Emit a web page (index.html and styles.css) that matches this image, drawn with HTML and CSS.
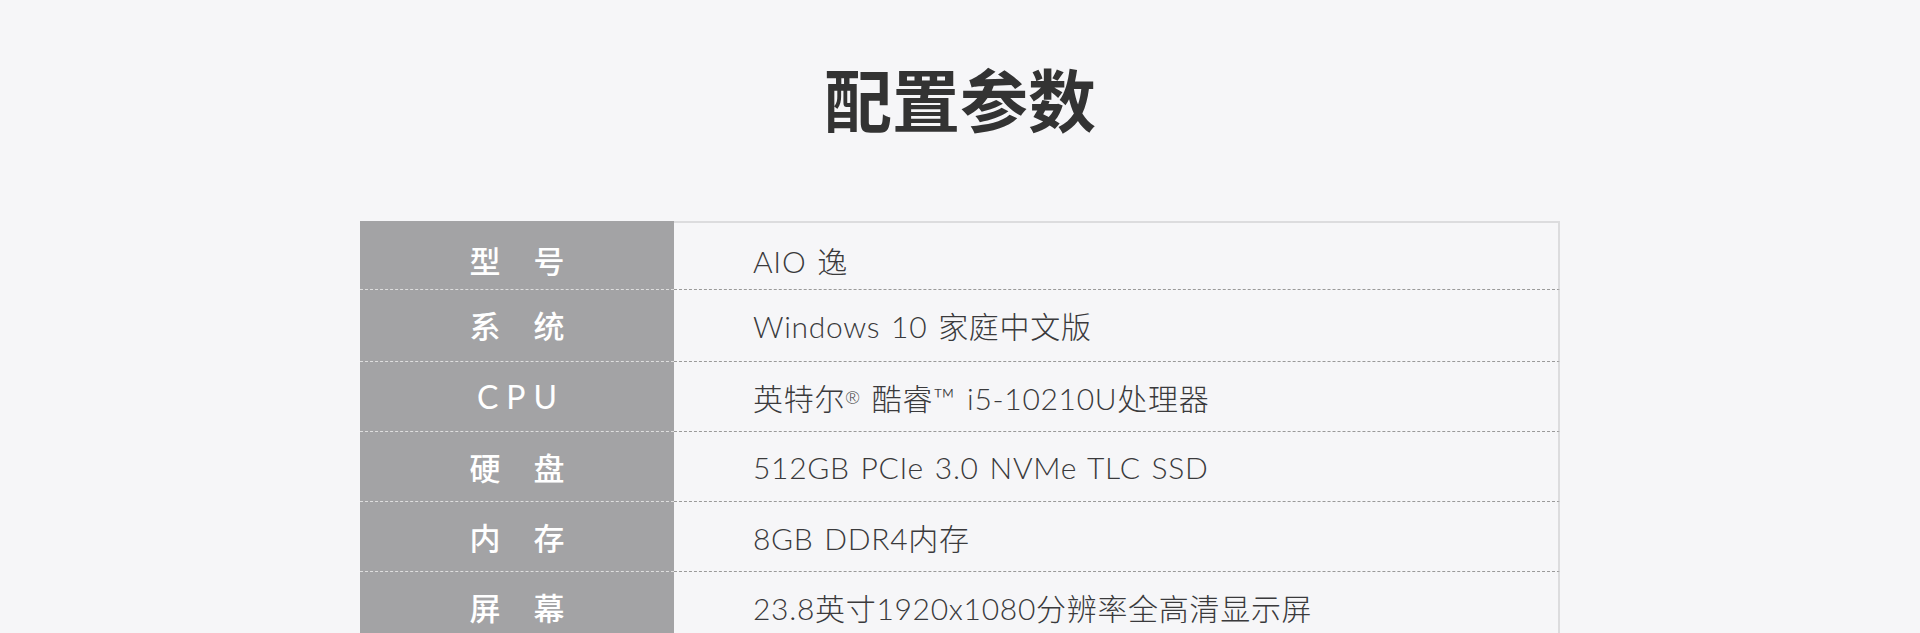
FILE: index.html
```html
<!DOCTYPE html>
<html lang="zh-CN">
<head>
<meta charset="utf-8">
<title>配置参数</title>
<link rel="stylesheet" href="styles.css">
</head>
<body>
<main class="page">
  <h1 class="title">配置参数</h1>
  <section class="specs">
    <div class="spec-row spec-row--first">
      <div class="spec-label">型号</div>
      <div class="spec-value">AIO 逸</div>
    </div>
    <div class="spec-row spec-row--tall">
      <div class="spec-label">系统</div>
      <div class="spec-value">Windows 10 家庭中文版</div>
    </div>
    <div class="spec-row">
      <div class="spec-label spec-label--latin">CPU</div>
      <div class="spec-value">英特尔<sup class="mark">®</sup> 酷睿™ i5-10210U处理器</div>
    </div>
    <div class="spec-row">
      <div class="spec-label">硬盘</div>
      <div class="spec-value">512GB PCIe 3.0 NVMe TLC SSD</div>
    </div>
    <div class="spec-row">
      <div class="spec-label">内存</div>
      <div class="spec-value">8GB DDR4内存</div>
    </div>
    <div class="spec-row">
      <div class="spec-label">屏幕</div>
      <div class="spec-value">23.8英寸1920x1080分辨率全高清显示屏</div>
    </div>
  </section>
</main>
</body>
</html>
```
FILE: styles.css
```css
html, body {
  margin: 0;
  padding: 0;
  background: #f6f6f8;
}

.page {
  display: flex;
  flex-direction: column;
  align-items: center;
  padding-top: 64px;
}

.title {
  margin: 0;
  font-family: "Noto Sans CJK SC", sans-serif;
  font-weight: 700;
  font-size: 68px;
  line-height: 1;
  color: #333333;
  letter-spacing: 0;
}

.specs {
  margin-top: 89px;
  width: 1200px;
  display: flex;
  flex-direction: column;
}

.spec-row {
  display: flex;
  height: 70px;
}

.spec-row--first {
  height: 69px;
}

.spec-row--tall {
  height: 72px;
}

.spec-label {
  width: 314px;
  flex: none;
  box-sizing: border-box;
  display: flex;
  align-items: center;
  justify-content: center;
  background: #a3a3a5;
  border-bottom: 1px dashed #dedede;
  color: #ffffff;
  font-family: "Noto Sans CJK SC", sans-serif;
  font-weight: 500;
  font-size: 31px;
  letter-spacing: 33px;
  text-indent: 33px;
}

.spec-label--latin {
  font-family: "Lato", "Noto Sans CJK SC", sans-serif;
  font-weight: 400;
  font-size: 32px;
  letter-spacing: 8px;
  text-indent: 8px;
}

.spec-value {
  flex: 1;
  box-sizing: border-box;
  display: flex;
  align-items: center;
  padding-left: 79px;
  border-right: 2px solid #dcdcde;
  border-bottom: 1px dashed #9a9a9a;
  color: #3a3a3c;
  font-family: "Lato", "Noto Sans CJK SC", sans-serif;
  font-weight: 300;
  font-size: 30px;
  letter-spacing: 0.7px;
  word-spacing: 2px;
  white-space: pre;
}

.spec-row--first .spec-value {
  border-top: 2px solid #dcdcde;
}

.spec-row--first .spec-label,
.spec-row--first .spec-value {
  padding-top: 8px;
}

.spec-row--tall .spec-label,
.spec-row--tall .spec-value {
  padding-bottom: 2px;
}

.mark {
  font-size: 0.6em;
  line-height: 0;
  vertical-align: 0.7em;
}
```
